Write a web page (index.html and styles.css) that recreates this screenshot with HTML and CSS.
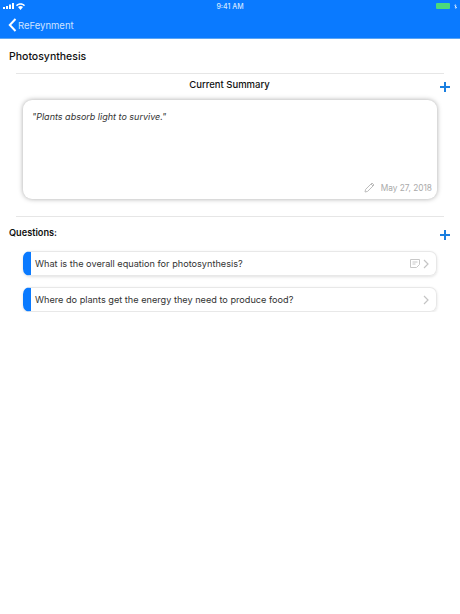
FILE: index.html
```html
<!DOCTYPE html>
<html lang="en">
<head>
  <meta charset="UTF-8" />
  <meta name="viewport" content="width=device-width, initial-scale=1" />
  <title>ReFeynment</title>
  <link rel="stylesheet" href="styles.css">
</head>
<body>
  <div class="header">
    <div class="status-bar">
      <div class="status-left">
        <svg width="12" height="6" viewBox="0 0 12 6"><path fill="#fff" d="M0 4h2v2H0zM3 3h2v3H3zM6 1.500h2V6H6zM9 0h2v6H9z"/></svg>
        <svg width="9" height="7" viewBox="0 0 9 7"><path fill="#fff" d="M0 2.200C2.500-.3 6.500-.3 9 2.200L8 3.200C6 1.400 3 1.400 1 3.200zM2 4.100c1.500-1.400 3.500-1.400 5 0L4.500 7z"/></svg>
      </div>
      <div class="status-time">9:41 AM</div>
      <div class="status-right">
        <div class="battery"></div>
        <svg width="3" height="5" viewBox="0 0 3 5"><path fill="#fff" d="M1.500 0v2L3 1.500 1.800 2.500 3 3.500 1.500 5V3L.4 3.700 1.300 2.500.4 1.300z"/></svg>
      </div>
    </div>
    <div class="nav-bar">
      <svg class="back-icon" width="9" height="14" viewBox="0 0 9 14"><path fill="none" stroke="#fff" stroke-width="2" d="M7.500 1L1.800 7l5.700 6"/></svg>
      <span class="back-label">ReFeynment</span>
    </div>
  </div>

  <div class="content">
    <h1 class="page-title">Photosynthesis</h1>

    <div class="divider"></div>
    <div class="summary-head">
      <h2 class="summary-title">Current Summary</h2>
      <svg class="plus plus-summary" width="10" height="10" viewBox="0 0 10 10"><path fill="none" stroke="#1a7fe0" stroke-width="2" d="M5 0v10M0 5h10"/></svg>
    </div>

    <div class="summary-card">
      <p class="summary-text">"Plants absorb light to survive."</p>
      <div class="summary-meta">
        <svg width="11" height="11" viewBox="0 0 11 11"><path fill="none" stroke="#bdbdbd" stroke-width="1" d="M1 10l.6-2.600L8 1l2 2-6.400 6.400zM7 2l2 2"/></svg>
        <span>May 27, 2018</span>
      </div>
    </div>

    <div class="divider divider-second"></div>
    <div class="questions-head">
      <h2 class="questions-title">Questions:</h2>
      <svg class="plus" width="10" height="10" viewBox="0 0 10 10"><path fill="none" stroke="#1a7fe0" stroke-width="2" d="M5 0v10M0 5h10"/></svg>
    </div>

    <div class="question-list">
      <div class="question">
        <span class="question-text">What is the overall equation for photosynthesis?</span>
        <svg width="10" height="9" viewBox="0 0 10 9"><path fill="none" stroke="#c8c8c8" stroke-width="1" d="M.5.500h9v5l-3 3h-6zM2.500 3h5M2.500 5h3"/></svg>
        <svg class="chevron" width="6" height="10" viewBox="0 0 6 10"><path fill="none" stroke="#c4c4c4" stroke-width="1.200" d="M1 1l4 4-4 4"/></svg>
      </div>
      <div class="question">
        <span class="question-text">Where do plants get the energy they need to produce food?</span>
        <svg class="chevron" width="6" height="10" viewBox="0 0 6 10"><path fill="none" stroke="#c4c4c4" stroke-width="1.200" d="M1 1l4 4-4 4"/></svg>
      </div>
    </div>
  </div>
</body>
</html>
```

FILE: styles.css
```css
body {
  font-family: Inter, "Liberation Sans", sans-serif;
  margin: 0;
  padding: 0;
  background-color: white;
  color: #111;
}

.header {
  background-color: #0a7aff;
  height: 38px;
  border-bottom: 1px solid #5aa5f5;
  color: white;
}
.status-bar {
  height: 12px;
  padding: 0 3px;
  display: grid;
  grid-template-columns: 1fr auto 1fr;
  align-items: center;
  font-size: 7px;
  font-weight: 500;
}
.status-left {
  display: flex;
  align-items: center;
  gap: 1px;
}
.status-time {
  padding-top: 1px;
  color: #d5e7ff;
}
.status-right {
  display: flex;
  justify-content: flex-end;
  align-items: center;
  gap: 4px;
}
.battery {
  width: 14px;
  height: 6px;
  background-color: #4cd97b;
  border-radius: 1px;
}
.nav-bar {
  height: 26px;
  padding-left: 8px;
  display: flex;
  align-items: center;
  gap: 1px;
}
.back-label {
  font-size: 9.5px;
  color: #cfe3ff;
}

.content {
  padding: 0 16px 0 9px;
}
.page-title {
  margin: 0;
  padding-top: 11px;
  font-size: 10.5px;
  line-height: 13px;
  font-weight: 500;
}
.divider {
  height: 1px;
  margin: 10px 0 0 7px;
  background-color: #e6e6e6;
}
.divider-second {
  margin-top: 17px;
}
.summary-head {
  position: relative;
  height: 26px;
  display: flex;
  justify-content: center;
  align-items: center;
}
.summary-title {
  margin: 0 0 6px 6px;
  font-size: 9.5px;
  font-weight: 500;
}
.plus {
  flex: none;
}
.plus-summary {
  position: absolute;
  right: -6px;
  top: 8px;
}

.summary-card {
  margin: 0 7px 0 14px;
  height: 99px;
  box-sizing: border-box;
  padding: 11px 5px 6px 9px;
  border-radius: 9px;
  background-color: white;
  box-shadow: 0 0 5px rgba(0, 0, 0, 0.35);
  display: flex;
  flex-direction: column;
  justify-content: space-between;
}
.summary-text {
  margin: 0;
  font-size: 9px;
  font-style: italic;
  color: #333;
}
.summary-meta {
  display: flex;
  justify-content: flex-end;
  align-items: center;
  gap: 6px;
  font-size: 8.3px;
  color: #aaa;
}

.questions-head {
  height: 34px;
  display: flex;
  justify-content: space-between;
  align-items: center;
  margin-right: -6px;
}
.questions-title {
  margin: 0 0 4px 0;
  font-size: 9.2px;
  font-weight: 600;
}
.questions-head .plus {
  margin-top: 2px;
}

.question-list {
  margin: 0 7px 0 14px;
  display: flex;
  flex-direction: column;
  gap: 11px;
}
.question {
  height: 25px;
  box-sizing: border-box;
  padding: 0 7px 0 4px;
  display: flex;
  align-items: center;
  gap: 3px;
  border: 1px solid #e8e8e8;
  border-left: 8px solid #0a7aff;
  border-radius: 7px;
  box-shadow: 0 1px 3px rgba(0, 0, 0, 0.12);
}
.question-text {
  flex: 1;
  font-size: 9.16px;
  color: #333;
}
```
